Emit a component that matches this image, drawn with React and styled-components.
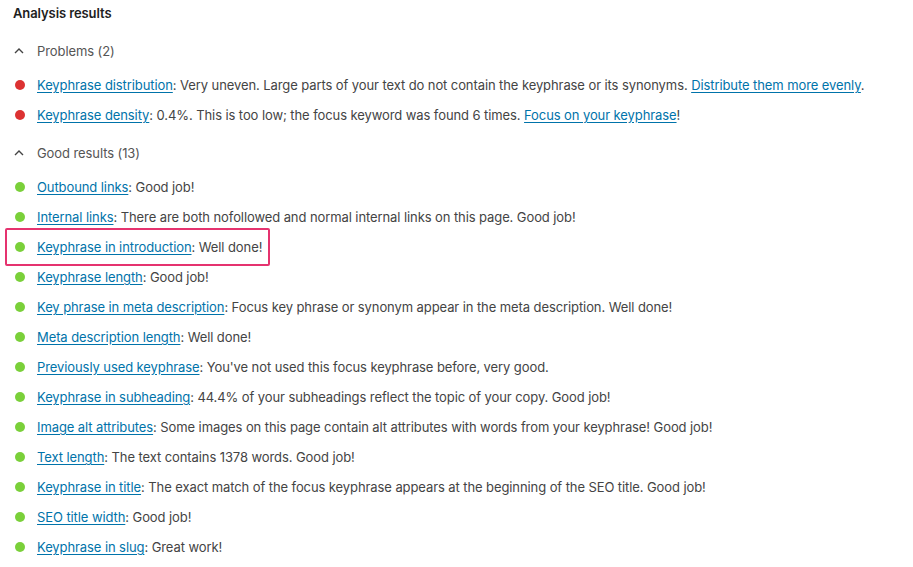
import React from 'react'
import styled, { createGlobalStyle } from 'styled-components'

const Global = createGlobalStyle`
  body {
    margin: 0;
    background: #fff;
    font-family: Inter, "Liberation Sans", Arial, sans-serif;
    letter-spacing: -0.09px;
    color: #444;
  }
`

const Panel = styled.div`
  padding: 0 0 0 13px;
`

const Title = styled.h2`
  margin: 0;
  height: 28px;
  line-height: 26px;
  font-size: 13px;
  font-weight: 600;
  color: #1e1e1e;
`

const Section = styled.section`
  margin-top: 8px;
`

const Heading = styled.div`
  display: flex;
  align-items: center;
  height: 30px;
  color: #555;
  font-size: 13px;
  svg {
    margin-left: 1px;
    margin-right: 13px;
  }
`

const List = styled.ul`
  list-style: none;
  margin: 0;
  padding: 4px 0 0 0;
`

const Item = styled.li`
  display: flex;
  align-items: center;
  height: 30px;
  font-size: 13px;
  color: #444;
  white-space: nowrap;
`

const Marked = styled.span`
  display: inline-flex;
  align-items: center;
  height: 38px;
  margin-left: -8px;
  padding: 0 6px 0 6px;
  border: 2px solid #e5336f;
  border-radius: 2px;
  box-sizing: border-box;
`

const Dot = styled.span`
  width: 10px;
  height: 10px;
  border-radius: 50%;
  background: ${({ $bad }) => ($bad ? '#dc3232' : '#7ad03a')};
  margin: 0 12px 0 2px;
  flex-shrink: 0;
`

const Link = styled.a`
  color: #0073aa;
  text-decoration: underline;
  text-underline-offset: 2px;
`

const Chevron = () => (
  <svg width="10" height="10" viewBox="0 0 10 10">
    <path d="M1 7 L5 3 L9 7" fill="none" stroke="#444" strokeWidth="1.4" />
  </svg>
)

const problems = [
  ['Keyphrase distribution', ': Very uneven. Large parts of your text do not contain the keyphrase or its synonyms. ', 'Distribute them more evenly', '.'],
  ['Keyphrase density', ': 0.4%. This is too low; the focus keyword was found 6 times. ', 'Focus on your keyphrase', '!'],
]

const good = [
  ['Outbound links', ': Good job!'],
  ['Internal links', ': There are both nofollowed and normal internal links on this page. Good job!'],
  ['Keyphrase in introduction', ': Well done!', true],
  ['Keyphrase length', ': Good job!'],
  ['Key phrase in meta description', ': Focus key phrase or synonym appear in the meta description. Well done!'],
  ['Meta description length', ': Well done!'],
  ['Previously used keyphrase', ": You've not used this focus keyphrase before, very good."],
  ['Keyphrase in subheading', ': 44.4% of your subheadings reflect the topic of your copy. Good job!'],
  ['Image alt attributes', ': Some images on this page contain alt attributes with words from your keyphrase! Good job!'],
  ['Text length', ': The text contains 1378 words. Good job!'],
  ['Keyphrase in title', ': The exact match of the focus keyphrase appears at the beginning of the SEO title. Good job!'],
  ['SEO title width', ': Good job!'],
  ['Keyphrase in slug', ': Great work!'],
]

export default function App() {
  return (
    <Panel>
      <Global />
      <Title>Analysis results</Title>
      <Section>
        <Heading><Chevron />Problems (2)</Heading>
        <List>
          {problems.map(([l, t, l2, end]) => (
            <Item key={l}>
              <Dot $bad />
              <span><Link href="#">{l}</Link>{t}<Link href="#">{l2}</Link>{end}</span>
            </Item>
          ))}
        </List>
      </Section>
      <Section>
        <Heading><Chevron />Good results (13)</Heading>
        <List>
          {good.map(([l, t, marked]) => {
            const content = (
              <>
                <Dot />
                <span><Link href="#">{l}</Link>{t}</span>
              </>
            )
            return (
              <Item key={l}>
                {marked ? <Marked>{content}</Marked> : content}
              </Item>
            )
          })}
        </List>
      </Section>
    </Panel>
  )
}
